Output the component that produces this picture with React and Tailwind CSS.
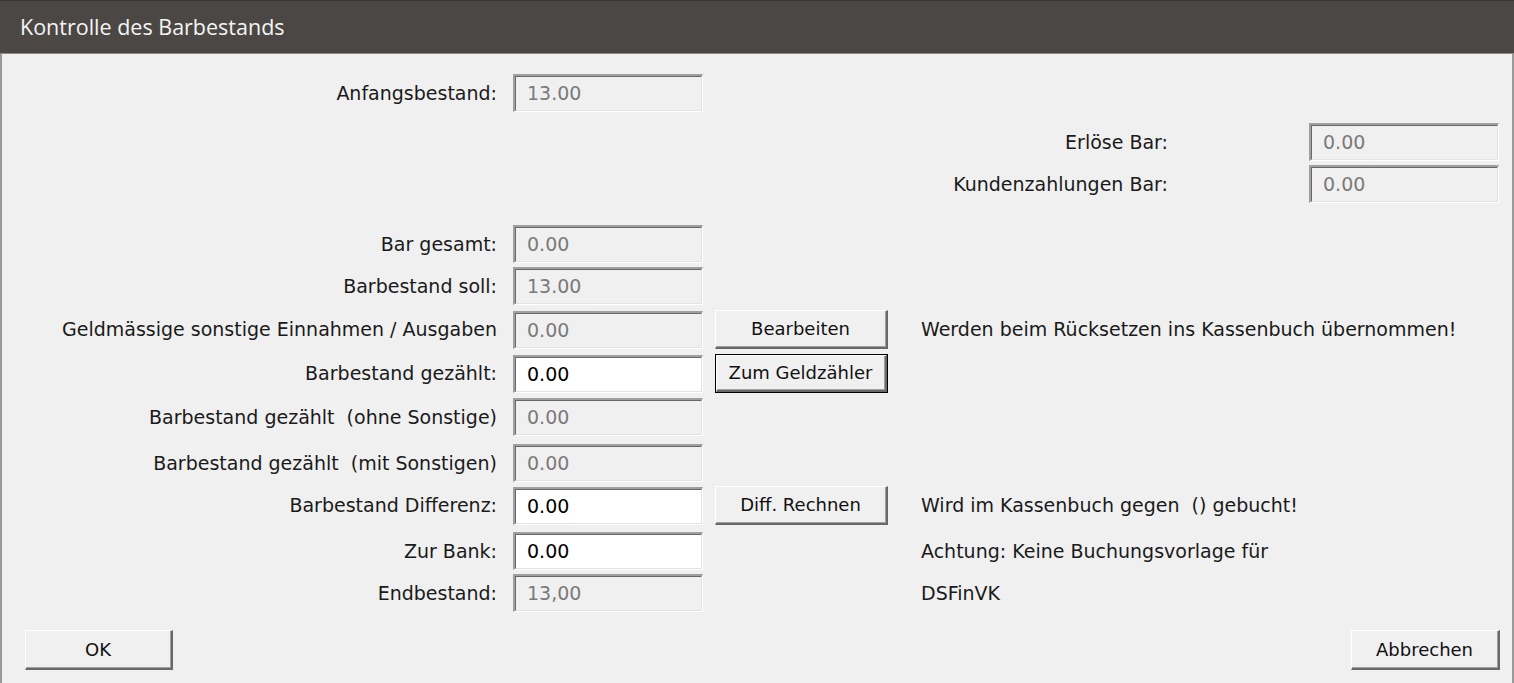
import React from "react";

const F = { fontFamily: '"DejaVu Sans", Verdana, sans-serif' };

function Field({ value, white }) {
  return (
    <div className="w-[190px] h-[38px] border-t-2 border-l-2 border-t-[#a0a0a0] border-l-[#a0a0a0] border-b border-r border-b-white border-r-white">
      <div
        className={`w-full h-full border-t border-l border-t-[#696969] border-l-[#696969] border-b border-r border-b-[#e3e3e3] border-r-[#e3e3e3] flex items-center pl-[11px] text-[19px] ${
          white ? "bg-white text-black" : "bg-[#f0f0f0] text-[#7a7a7a]"
        }`}
      >
        {value}
      </div>
    </div>
  );
}

function Btn({ children, w = "w-[173px]", h = "h-[39px]", def }) {
  const inner = (
    <div className="w-full h-full border-t border-l border-t-white border-l-white border-b-2 border-r-2 border-b-[#696969] border-r-[#696969]">
      <div className="w-full h-full border-b border-r border-b-[#a0a0a0] border-r-[#a0a0a0] bg-[#f0f0f0] flex items-center justify-center text-[18px] text-[#111]">
        {children}
      </div>
    </div>
  );
  if (def) {
    return <div className={`${w} ${h} border border-black`}>{inner}</div>;
  }
  return <div className={`${w} ${h}`}>{inner}</div>;
}

function Row({ mt, label, value, white, btn, def, note }) {
  return (
    <div className={`flex items-center ${mt}`}>
      <div className="w-[511px] pr-[16px] text-right text-[19px] text-[#1a1a1a] whitespace-pre">
        {label}
      </div>
      <Field value={value} white={white} />
      <div className="w-[12px]" />
      <div className="w-[173px]">{btn && <Btn def={def}>{btn}</Btn>}</div>
      <div className="w-[33px]" />
      {note && <div className="text-[19px] text-[#1a1a1a] whitespace-pre">{note}</div>}
    </div>
  );
}

function RightRow({ mt, label, value }) {
  return (
    <div className={`flex items-center ${mt}`}>
      <div className="w-[1166px] text-right text-[19px] text-[#1a1a1a] whitespace-pre">{label}</div>
      <div className="w-[141px]" />
      <Field value={value} />
    </div>
  );
}

export default function App() {
  return (
    <div className="w-[1514px] h-[683px] bg-[#f0f0f0] flex flex-col overflow-hidden" style={F}>
      <div className="h-[54px] bg-[#4b4744] border-t border-t-[#3a3634] border-b border-b-[#8d8985] flex items-center pl-[20px]">
        <span className="text-[#f4f4f4] text-[21.5px]" style={{ fontFamily: '"Open Sans", "DejaVu Sans", sans-serif' }}>
          Kontrolle des Barbestands
        </span>
      </div>
      <div className="flex-1 border-l-2 border-r-2 border-l-[#9a9a9a] border-r-[#9a9a9a] flex flex-col">
        <Row mt="mt-[20px]" label="Anfangsbestand:" value="13.00" />
        <RightRow mt="mt-[11px]" label="Erlöse Bar:" value="0.00" />
        <RightRow mt="mt-[4px]" label="Kundenzahlungen Bar:" value="0.00" />
        <Row mt="mt-[22px]" label="Bar gesamt:" value="0.00" />
        <Row mt="mt-[4px]" label="Barbestand soll:" value="13.00" />
        <Row
          mt="mt-[5px]"
          label="Geldmässige sonstige Einnahmen / Ausgaben"
          value="0.00"
          btn="Bearbeiten"
          note="Werden beim Rücksetzen ins Kassenbuch übernommen!"
        />
        <Row mt="mt-[5px]" label="Barbestand gezählt:" value="0.00" white btn="Zum Geldzähler" def />
        <Row mt="mt-[5px]" label="Barbestand gezählt  (ohne Sonstige)" value="0.00" />
        <Row mt="mt-[8px]" label="Barbestand gezählt  (mit Sonstigen)" value="0.00" />
        <Row
          mt="mt-[4px]"
          label="Barbestand Differenz:"
          value="0.00"
          white
          btn="Diff. Rechnen"
          note="Wird im Kassenbuch gegen  () gebucht!"
        />
        <Row mt="mt-[7px]" label="Zur Bank:" value="0.00" white note="Achtung: Keine Buchungsvorlage für" />
        <Row mt="mt-[4px]" label="Endbestand:" value="13,00" note="DSFinVK" />
        <div className="flex justify-between items-center mt-[18px] pl-[23px] pr-[12px]">
          <Btn w="w-[148px]" h="h-[40px]">OK</Btn>
          <Btn w="w-[149px]" h="h-[40px]">Abbrechen</Btn>
        </div>
      </div>
    </div>
  );
}
